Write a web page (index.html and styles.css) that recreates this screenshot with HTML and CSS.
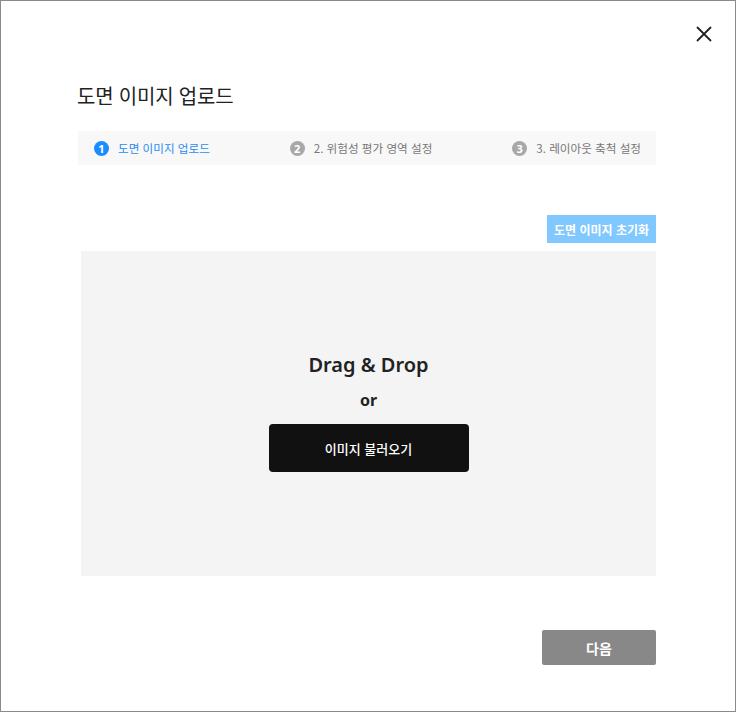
FILE: index.html
```html
<!DOCTYPE html>
<html lang="ko">
<head>
<meta charset="utf-8">
<link rel="stylesheet" href="styles.css">
</head>
<body>
<div class="modal">
  <div class="close-row">
    <button class="close" aria-label="닫기">
      <svg width="18" height="18" viewBox="0 0 18 18"><path d="M2 2L16 16M16 2L2 16" stroke="#222" stroke-width="1.8" fill="none"/></svg>
    </button>
  </div>
  <h1 class="title">도면 이미지 업로드</h1>
  <div class="steps">
    <div class="step active"><span class="num">1</span><span>도면 이미지 업로드</span></div>
    <div class="step"><span class="num">2</span><span>2. 위험성 평가 영역 설정</span></div>
    <div class="step"><span class="num">3</span><span>3. 레이아웃 축척 설정</span></div>
  </div>
  <div class="tools">
    <button class="reset">도면 이미지 초기화</button>
  </div>
  <div class="drop">
    <div class="dd">Drag &amp; Drop</div>
    <div class="or">or</div>
    <button class="load">이미지 불러오기</button>
  </div>
  <div class="footer">
    <button class="next">다음</button>
  </div>
</div>
</body>
</html>
```
FILE: styles.css
```css
html, body { margin: 0; padding: 0; background: #fff; }
body { font-family: "Noto Sans CJK KR", "Noto Sans", sans-serif; color: #222; }
.modal {
  width: 736px; height: 712px; box-sizing: border-box;
  border: 1px solid #8a8a8a; background: #fff;
  padding: 0 79px 0 76px;
  display: flex; flex-direction: column;
}
.close-row { display: flex; justify-content: flex-end; margin-right: -58px; padding-top: 23px; height: 20px; }
.close { border: 0; background: none; padding: 0; width: 20px; height: 20px; display: flex; align-items: center; justify-content: center; cursor: pointer; }
.title { margin: 38px 0 0 0; font-size: 20px; font-weight: 400; line-height: 28px; color: #222; letter-spacing: -0.2px; }
.steps {
  margin: 21px 0 0 1px; height: 34px; background: #f8f8f8;
  display: flex; align-items: center; justify-content: space-between;
  padding: 0 15px 0 16px; font-size: 11.6px; color: #777;
}
.step { display: flex; align-items: center; gap: 9px; }
.step .num {
  width: 15px; height: 15px; border-radius: 50%; background: #a8a8a8; color: #fff;
  font-family: "Noto Sans", sans-serif; font-weight: 700; font-size: 11px; line-height: 15px;
  display: inline-flex; align-items: center; justify-content: center;
}
.step.active { color: #2a8cf0; }
.step.active .num { background: #1a8cff; }
.tools { display: flex; justify-content: flex-end; margin-top: 50px; }
.reset {
  border: 0; background: #80c8ff; color: #fff; font-family: inherit; font-weight: 700;
  font-size: 12px; height: 28px; width: 109px; padding: 0; margin-right: 0;
}
.drop {
  margin: 8px 0 0 4px; height: 325px; background: #f4f4f4;
  display: flex; flex-direction: column; align-items: center; justify-content: flex-start;
}
.dd { margin-top: 100px; font-family: "Noto Sans", sans-serif; font-weight: 600; font-size: 20px; line-height: 28px; color: #222; }
.or { margin-top: 9px; font-family: "Noto Sans", sans-serif; font-weight: 700; font-size: 16px; line-height: 24px; color: #222; }
.load {
  margin-top: 12px; width: 200px; height: 48px; border: 0; border-radius: 4px;
  background: #111; color: #fff; font-family: inherit; font-size: 13px; font-weight: 500;
}
.footer { display: flex; justify-content: flex-end; margin-top: 54px; }
.next {
  width: 114px; height: 35px; border: 0; border-radius: 2px; background: #888;
  color: #fff; font-family: inherit; font-size: 14px; font-weight: 700;
}
```
